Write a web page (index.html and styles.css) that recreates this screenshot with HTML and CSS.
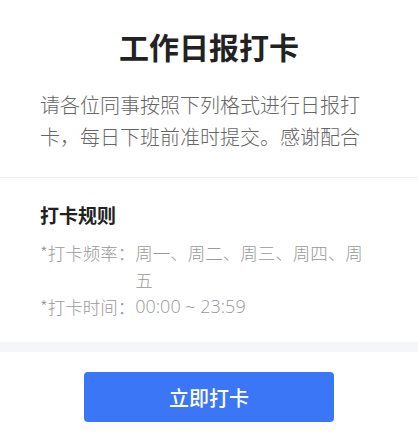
FILE: index.html
```html
<!DOCTYPE html>
<html lang="zh-CN">
<head>
<meta charset="utf-8">
<title>工作日报打卡</title>
<link rel="stylesheet" href="styles.css">
</head>
<body>
<div class="page">
  <header class="intro">
    <h1 class="title">工作日报打卡</h1>
    <p class="desc">请各位同事按照下列格式进行日报打卡，每日下班前准时提交。感谢配合</p>
  </header>
  <section class="rules">
    <h2 class="rules-title">打卡规则</h2>
    <div class="rule">
      <span class="rule-label">*打卡频率：</span>
      <span class="rule-value">周一、周二、周三、周四、周五</span>
    </div>
    <div class="rule">
      <span class="rule-label">*打卡时间：</span>
      <span class="rule-value rule-num">00:00 ~ 23:59</span>
    </div>
  </section>
  <div class="band"></div>
  <footer class="actions">
    <button class="btn-primary" type="button">立即打卡</button>
  </footer>
</div>
</body>
</html>
```

FILE: styles.css
```css
* {
  box-sizing: border-box;
}

html, body {
  margin: 0;
  padding: 0;
  background: #ffffff;
}

body {
  font-family: "Noto Sans CJK SC", "Noto Sans", sans-serif;
  color: #222;
}

.page {
  width: 418px;
}

.intro {
  padding: 25px 40px 24px;
  border-bottom: 1px solid #eeeeee;
}

.title {
  margin: 0;
  text-align: center;
  font-size: 30px;
  line-height: 42px;
  font-weight: 700;
  color: #222;
}

.desc {
  margin: 22px 0 0;
  font-size: 20px;
  line-height: 32px;
  font-weight: 300;
  color: #666;
}

.rules {
  padding: 24px 44px 22px 40px;
}

.rules-title {
  margin: 0 0 11px;
  font-size: 19px;
  line-height: 26px;
  font-weight: 700;
  color: #222;
}

.rule {
  display: flex;
  font-size: 17.5px;
  line-height: 27px;
  font-weight: 300;
  color: #999;
}

.rule-label {
  flex: none;
  white-space: nowrap;
}

.rule-value {
  flex: 1;
  min-width: 0;
}

.rule-num {
  font-family: "Open Sans", "Noto Sans CJK SC", sans-serif;
  font-size: 18px;
}

.band {
  height: 10px;
  background: #f5f6f9;
}

.actions {
  display: flex;
  justify-content: center;
  padding: 20px 0;
}

.btn-primary {
  width: 250px;
  height: 50px;
  border: none;
  border-radius: 4px;
  background: #3b76f6;
  color: #fff;
  font-family: "Noto Sans CJK SC", "Noto Sans", sans-serif;
  font-size: 20px;
  font-weight: 500;
  cursor: pointer;
}
```
